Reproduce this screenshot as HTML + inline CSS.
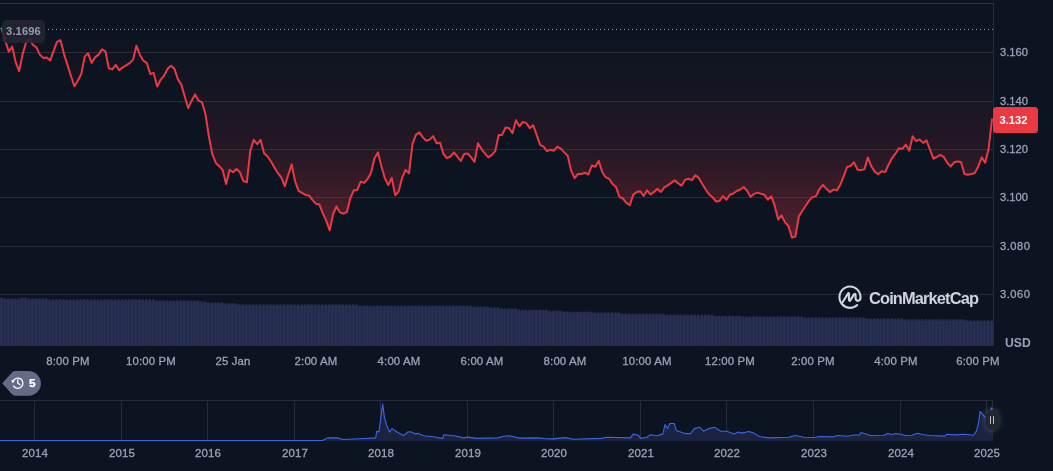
<!DOCTYPE html>
<html><head><meta charset="utf-8"><title>Chart</title>
<style>
html,body{margin:0;padding:0;background:#0d1421;}
body{width:1053px;height:471px;position:relative;overflow:hidden;font-family:"Liberation Sans",sans-serif;color:#9ba1b8;}
svg{position:absolute;left:0;top:0;}
.tl,.yr,.pl,.usd,.cur,.open,.hist,.wm{will-change:transform;}
.tl,.yr,.pl{-webkit-text-stroke:0.3px #9ba1b8;}
.tl{position:absolute;top:353px;width:80px;height:16px;line-height:16px;text-align:center;font-size:11.4px;white-space:nowrap;letter-spacing:0.15px;}
.yr{position:absolute;top:445px;width:40px;height:16px;line-height:16px;text-align:center;font-size:11.5px;letter-spacing:0.1px;}
.pl{position:absolute;left:999.5px;height:16px;line-height:16px;font-size:11.2px;}
.usd{position:absolute;left:1005.4px;top:334.6px;height:16px;line-height:16px;font-size:12.2px;font-weight:bold;}
.cur{position:absolute;left:993px;top:107px;width:45px;height:26px;border-radius:3.5px;background:#ea3943;color:#fff;font-weight:bold;font-size:11.2px;line-height:26px;text-indent:6.5px;}
.open{position:absolute;left:2px;top:20px;width:43px;height:22.8px;border-radius:4.5px;letter-spacing:0.1px;background:rgba(36,38,50,.88);color:#949ab2;font-weight:bold;font-size:11.2px;line-height:22px;text-align:center;}
.hist{position:absolute;left:29.1px;top:374.9px;height:16px;line-height:16px;font-size:11.8px;-webkit-text-stroke:0.25px #fff;font-weight:bold;color:#fff;}
.wm{position:absolute;left:869.4px;top:288.3px;height:20px;line-height:20px;font-size:16.4px;font-weight:bold;color:#d1d4e0;letter-spacing:-0.86px;white-space:nowrap;}
</style></head><body>
<svg width="1053" height="471" viewBox="0 0 1053 471">
<defs>
<linearGradient id="rg" x1="0" y1="29" x2="0" y2="240" gradientUnits="userSpaceOnUse">
<stop offset="0" stop-color="#ea3943" stop-opacity="0"/>
<stop offset="0.2" stop-color="#ea3943" stop-opacity="0.024"/>
<stop offset="0.34" stop-color="#ea3943" stop-opacity="0.053"/>
<stop offset="0.573" stop-color="#ea3943" stop-opacity="0.11"/>
<stop offset="0.763" stop-color="#ea3943" stop-opacity="0.205"/>
<stop offset="1" stop-color="#ea3943" stop-opacity="0.32"/>
</linearGradient>
<filter id="gl" x="-100%" y="-100%" width="300%" height="300%"><feGaussianBlur stdDeviation="2.6"/></filter>
</defs>
<g stroke="#282c3a" stroke-width="1" shape-rendering="crispEdges">
<line x1="0" y1="3.5" x2="993" y2="3.5" stroke="#323645"/>
<line x1="0" y1="52.5" x2="993" y2="52.5"/><line x1="0" y1="101.5" x2="993" y2="101.5"/><line x1="0" y1="149.5" x2="993" y2="149.5"/><line x1="0" y1="197.5" x2="993" y2="197.5"/><line x1="0" y1="246.5" x2="993" y2="246.5"/><line x1="0" y1="294.5" x2="993" y2="294.5"/>
</g>
<path d="M0,29.4 L1.9,29.4 L5.35,41.1 L8.8,51.6 L12.25,46.6 L15.7,62.4 L19.15,71.2 L22.6,54.1 L26.05,42.5 L29.5,39.1 L32.95,44.9 L36.4,47.4 L39.85,54.6 L43.3,57.9 L46.75,57.4 L50.2,60.4 L53.65,50.8 L57.1,41.6 L60.55,40.3 L64.0,54.1 L67.45,64.9 L70.9,75.7 L74.35,86.2 L77.8,80.7 L81.25,74.0 L84.7,56.6 L88.15,53.3 L91.6,62.9 L95.05,57.4 L98.5,54.6 L101.95,49.4 L105.4,51.3 L108.85,68.2 L112.3,69.4 L115.75,64.9 L119.2,70.2 L122.65,67.4 L126.1,65.4 L129.55,63.2 L133.0,59.9 L136.45,45.8 L139.9,54.9 L143.35,60.7 L146.8,62.9 L150.25,74.0 L153.7,72.9 L157.15,86.5 L160.6,79.8 L164.05,75.7 L167.5,69.0 L170.95,65.8 L174.4,68.6 L177.85,79.1 L181.3,84.6 L184.75,96.5 L188.2,108.2 L191.65,100.7 L195.1,94.4 L198.55,100.7 L202.0,102.4 L205.45,114.0 L208.9,136.6 L212.35,154.1 L215.8,162.9 L219.25,166.2 L222.7,170.2 L226.15,184.0 L229.6,169.8 L233.05,172.3 L236.5,169.0 L239.95,172.3 L243.4,181.1 L246.85,182.3 L250.3,150.7 L253.75,139.9 L257.2,144.1 L260.65,139.9 L264.1,153.2 L267.55,156.5 L271.0,161.5 L274.45,167.4 L277.9,173.2 L281.35,177.7 L284.8,186.1 L288.25,174.8 L291.7,164.4 L295.15,181.5 L298.6,190.8 L302.05,192.9 L305.5,194.9 L308.95,195.4 L312.4,199.9 L315.85,203.7 L319.3,204.4 L322.75,213.2 L326.2,220.7 L329.65,230.3 L333.1,214.0 L336.55,206.5 L340.0,212.4 L343.45,213.7 L346.9,211.9 L350.35,198.2 L353.8,190.3 L357.25,189.9 L360.7,181.6 L364.15,182.9 L367.6,178.9 L371.05,172.7 L374.5,158.2 L377.95,152.4 L381.4,166.2 L384.85,178.2 L388.3,185.0 L391.75,177.9 L395.2,195.2 L398.65,191.6 L402.1,177.8 L405.55,169.9 L409.0,173.4 L412.45,144.1 L415.9,134.9 L419.35,132.4 L422.8,137.4 L426.25,140.7 L429.7,139.6 L433.15,136.1 L436.6,143.2 L440.05,142.7 L443.5,154.0 L446.95,158.2 L450.4,156.5 L453.85,152.4 L457.3,156.5 L460.75,161.0 L464.2,154.0 L467.65,153.5 L471.1,157.4 L474.55,161.9 L478.0,143.2 L481.45,149.1 L484.9,153.5 L488.35,157.4 L491.8,154.9 L495.25,151.1 L498.7,134.9 L502.15,134.9 L505.6,127.5 L509.05,128.3 L512.5,133.3 L515.95,120.3 L519.4,126.3 L522.85,122.0 L526.3,123.1 L529.75,128.1 L533.2,125.3 L536.65,134.9 L540.1,144.9 L543.55,146.6 L547.0,151.2 L550.45,149.6 L553.9,150.7 L557.35,146.6 L560.8,148.6 L564.25,152.4 L567.7,155.7 L571.15,170.7 L574.6,178.1 L578.05,174.0 L581.5,174.0 L584.95,172.7 L588.4,174.5 L591.85,165.5 L595.3,166.8 L598.75,160.9 L602.2,172.0 L605.65,177.2 L609.1,178.8 L612.55,184.0 L616.0,186.9 L619.45,197.0 L622.9,198.5 L626.35,202.8 L629.8,205.1 L633.25,194.8 L636.7,192.0 L640.15,191.2 L643.6,196.0 L647.05,190.4 L650.5,194.5 L653.95,191.9 L657.4,188.7 L660.85,192.0 L664.3,187.4 L667.75,185.4 L671.2,182.9 L674.65,180.4 L678.1,183.2 L681.55,185.7 L685.0,179.9 L688.45,178.7 L691.9,180.2 L695.35,175.4 L698.8,177.9 L702.25,184.0 L705.7,189.5 L709.15,194.5 L712.6,197.3 L716.05,201.5 L719.5,201.0 L722.95,196.0 L726.4,199.8 L729.85,194.8 L733.3,193.5 L736.75,191.0 L740.2,189.5 L743.65,187.0 L747.1,190.7 L750.55,196.8 L754.0,193.9 L757.45,192.6 L760.9,193.7 L764.35,194.7 L767.8,199.6 L771.25,196.2 L774.7,205.7 L778.15,219.5 L781.6,215.4 L785.05,222.3 L788.5,226.2 L791.95,237.6 L795.4,236.5 L798.85,216.5 L802.3,210.7 L805.75,205.7 L809.2,200.4 L812.65,197.1 L816.1,196.1 L819.55,188.8 L823.0,184.9 L826.45,188.8 L829.9,192.1 L833.35,189.6 L836.8,190.4 L840.25,184.9 L843.7,176.1 L847.15,167.0 L850.6,165.9 L854.05,162.3 L857.5,169.7 L860.95,170.1 L864.4,169.3 L867.85,157.4 L871.3,166.3 L874.75,171.6 L878.2,174.2 L881.65,171.2 L885.1,172.1 L888.55,164.8 L892.0,158.2 L895.45,153.7 L898.9,148.2 L902.35,149.0 L905.8,144.6 L909.25,150.7 L912.7,136.2 L916.15,141.2 L919.6,139.4 L923.05,142.9 L926.5,140.4 L929.95,149.5 L933.4,158.7 L936.85,157.0 L940.3,154.9 L943.75,156.9 L947.2,162.7 L950.65,166.5 L954.1,162.3 L957.55,161.5 L961.0,162.0 L964.45,174.0 L967.9,174.8 L971.35,174.0 L974.8,173.1 L978.25,166.5 L981.7,157.4 L985.15,162.8 L988.6,149.0 L992.0,119.3 L992,29.4 Z" fill="url(#rg)"/>
<g fill="#222947" shape-rendering="crispEdges"><rect x="-0.44" y="298.9" width="3.49" height="46.4"/><rect x="3.01" y="299.8" width="3.49" height="45.5"/><rect x="6.46" y="299.8" width="3.49" height="45.5"/><rect x="9.91" y="299.8" width="3.49" height="45.5"/><rect x="13.36" y="299.8" width="3.49" height="45.5"/><rect x="16.81" y="299.8" width="3.49" height="45.5"/><rect x="20.26" y="298.9" width="3.49" height="46.4"/><rect x="23.71" y="298.9" width="3.49" height="46.4"/><rect x="27.16" y="299.8" width="3.49" height="45.5"/><rect x="30.61" y="299.8" width="3.49" height="45.5"/><rect x="34.06" y="299.8" width="3.49" height="45.5"/><rect x="37.51" y="299.8" width="3.49" height="45.5"/><rect x="40.96" y="299.8" width="3.49" height="45.5"/><rect x="44.41" y="299.8" width="3.49" height="45.5"/><rect x="47.86" y="300.8" width="3.49" height="44.5"/><rect x="51.31" y="300.8" width="3.49" height="44.5"/><rect x="54.76" y="300.8" width="3.49" height="44.5"/><rect x="58.21" y="300.8" width="3.49" height="44.5"/><rect x="61.66" y="300.8" width="3.49" height="44.5"/><rect x="65.11" y="300.8" width="3.49" height="44.5"/><rect x="68.56" y="300.8" width="3.49" height="44.5"/><rect x="72.01" y="300.8" width="3.49" height="44.5"/><rect x="75.46" y="300.8" width="3.49" height="44.5"/><rect x="78.91" y="300.8" width="3.49" height="44.5"/><rect x="82.36" y="300.8" width="3.49" height="44.5"/><rect x="85.81" y="300.8" width="3.49" height="44.5"/><rect x="89.26" y="300.8" width="3.49" height="44.5"/><rect x="92.71" y="300.8" width="3.49" height="44.5"/><rect x="96.16" y="300.8" width="3.49" height="44.5"/><rect x="99.61" y="300.8" width="3.49" height="44.5"/><rect x="103.06" y="300.8" width="3.49" height="44.5"/><rect x="106.51" y="300.8" width="3.49" height="44.5"/><rect x="109.96" y="300.8" width="3.49" height="44.5"/><rect x="113.41" y="300.8" width="3.49" height="44.5"/><rect x="116.86" y="300.8" width="3.49" height="44.5"/><rect x="120.31" y="300.8" width="3.49" height="44.5"/><rect x="123.76" y="300.8" width="3.49" height="44.5"/><rect x="127.21" y="300.8" width="3.49" height="44.5"/><rect x="130.66" y="300.8" width="3.49" height="44.5"/><rect x="134.11" y="300.8" width="3.49" height="44.5"/><rect x="137.56" y="300.8" width="3.49" height="44.5"/><rect x="141.01" y="300.8" width="3.49" height="44.5"/><rect x="144.46" y="300.8" width="3.49" height="44.5"/><rect x="147.91" y="300.8" width="3.49" height="44.5"/><rect x="151.36" y="300.8" width="3.49" height="44.5"/><rect x="154.81" y="301.7" width="3.49" height="43.6"/><rect x="158.26" y="301.7" width="3.49" height="43.6"/><rect x="161.71" y="301.7" width="3.49" height="43.6"/><rect x="165.16" y="301.7" width="3.49" height="43.6"/><rect x="168.61" y="301.7" width="3.49" height="43.6"/><rect x="172.06" y="301.7" width="3.49" height="43.6"/><rect x="175.51" y="301.7" width="3.49" height="43.6"/><rect x="178.96" y="301.7" width="3.49" height="43.6"/><rect x="182.41" y="301.7" width="3.49" height="43.6"/><rect x="185.86" y="301.7" width="3.49" height="43.6"/><rect x="189.31" y="301.7" width="3.49" height="43.6"/><rect x="192.76" y="301.7" width="3.49" height="43.6"/><rect x="196.21" y="301.7" width="3.49" height="43.6"/><rect x="199.66" y="302.7" width="3.49" height="42.6"/><rect x="203.11" y="302.7" width="3.49" height="42.6"/><rect x="206.56" y="303.8" width="3.49" height="41.5"/><rect x="210.01" y="303.8" width="3.49" height="41.5"/><rect x="213.46" y="303.8" width="3.49" height="41.5"/><rect x="216.91" y="303.8" width="3.49" height="41.5"/><rect x="220.36" y="303.8" width="3.49" height="41.5"/><rect x="223.81" y="304.8" width="3.49" height="40.5"/><rect x="227.26" y="304.8" width="3.49" height="40.5"/><rect x="230.71" y="304.8" width="3.49" height="40.5"/><rect x="234.16" y="304.8" width="3.49" height="40.5"/><rect x="237.61" y="305.8" width="3.49" height="39.5"/><rect x="241.06" y="305.8" width="3.49" height="39.5"/><rect x="244.51" y="305.8" width="3.49" height="39.5"/><rect x="247.96" y="305.8" width="3.49" height="39.5"/><rect x="251.41" y="305.8" width="3.49" height="39.5"/><rect x="254.86" y="305.8" width="3.49" height="39.5"/><rect x="258.31" y="305.8" width="3.49" height="39.5"/><rect x="261.76" y="305.8" width="3.49" height="39.5"/><rect x="265.21" y="305.8" width="3.49" height="39.5"/><rect x="268.66" y="305.8" width="3.49" height="39.5"/><rect x="272.11" y="305.8" width="3.49" height="39.5"/><rect x="275.56" y="305.8" width="3.49" height="39.5"/><rect x="279.01" y="305.8" width="3.49" height="39.5"/><rect x="282.46" y="305.8" width="3.49" height="39.5"/><rect x="285.91" y="305.8" width="3.49" height="39.5"/><rect x="289.36" y="305.8" width="3.49" height="39.5"/><rect x="292.81" y="305.8" width="3.49" height="39.5"/><rect x="296.26" y="305.8" width="3.49" height="39.5"/><rect x="299.71" y="305.8" width="3.49" height="39.5"/><rect x="303.16" y="305.8" width="3.49" height="39.5"/><rect x="306.61" y="305.8" width="3.49" height="39.5"/><rect x="310.06" y="305.8" width="3.49" height="39.5"/><rect x="313.51" y="305.8" width="3.49" height="39.5"/><rect x="316.96" y="305.8" width="3.49" height="39.5"/><rect x="320.41" y="305.8" width="3.49" height="39.5"/><rect x="323.86" y="305.8" width="3.49" height="39.5"/><rect x="327.31" y="305.8" width="3.49" height="39.5"/><rect x="330.76" y="305.8" width="3.49" height="39.5"/><rect x="334.21" y="305.8" width="3.49" height="39.5"/><rect x="337.66" y="305.8" width="3.49" height="39.5"/><rect x="341.11" y="305.8" width="3.49" height="39.5"/><rect x="344.56" y="305.8" width="3.49" height="39.5"/><rect x="348.01" y="305.8" width="3.49" height="39.5"/><rect x="351.46" y="305.8" width="3.49" height="39.5"/><rect x="354.91" y="305.8" width="3.49" height="39.5"/><rect x="358.36" y="306.9" width="3.49" height="38.4"/><rect x="361.81" y="306.9" width="3.49" height="38.4"/><rect x="365.26" y="306.9" width="3.49" height="38.4"/><rect x="368.71" y="306.9" width="3.49" height="38.4"/><rect x="372.16" y="306.9" width="3.49" height="38.4"/><rect x="375.61" y="306.9" width="3.49" height="38.4"/><rect x="379.06" y="306.9" width="3.49" height="38.4"/><rect x="382.51" y="306.9" width="3.49" height="38.4"/><rect x="385.96" y="306.9" width="3.49" height="38.4"/><rect x="389.41" y="306.9" width="3.49" height="38.4"/><rect x="392.86" y="306.9" width="3.49" height="38.4"/><rect x="396.31" y="306.9" width="3.49" height="38.4"/><rect x="399.76" y="306.9" width="3.49" height="38.4"/><rect x="403.21" y="306.9" width="3.49" height="38.4"/><rect x="406.66" y="306.9" width="3.49" height="38.4"/><rect x="410.11" y="306.9" width="3.49" height="38.4"/><rect x="413.56" y="306.9" width="3.49" height="38.4"/><rect x="417.01" y="306.9" width="3.49" height="38.4"/><rect x="420.46" y="306.9" width="3.49" height="38.4"/><rect x="423.91" y="306.9" width="3.49" height="38.4"/><rect x="427.36" y="306.9" width="3.49" height="38.4"/><rect x="430.81" y="306.9" width="3.49" height="38.4"/><rect x="434.26" y="306.9" width="3.49" height="38.4"/><rect x="437.71" y="306.9" width="3.49" height="38.4"/><rect x="441.16" y="306.9" width="3.49" height="38.4"/><rect x="444.61" y="306.9" width="3.49" height="38.4"/><rect x="448.06" y="306.9" width="3.49" height="38.4"/><rect x="451.51" y="306.9" width="3.49" height="38.4"/><rect x="454.96" y="306.9" width="3.49" height="38.4"/><rect x="458.41" y="306.9" width="3.49" height="38.4"/><rect x="461.86" y="306.9" width="3.49" height="38.4"/><rect x="465.31" y="306.9" width="3.49" height="38.4"/><rect x="468.76" y="306.9" width="3.49" height="38.4"/><rect x="472.21" y="307.9" width="3.49" height="37.4"/><rect x="475.66" y="307.9" width="3.49" height="37.4"/><rect x="479.11" y="307.9" width="3.49" height="37.4"/><rect x="482.56" y="307.9" width="3.49" height="37.4"/><rect x="486.01" y="307.9" width="3.49" height="37.4"/><rect x="489.46" y="308.8" width="3.49" height="36.5"/><rect x="492.91" y="308.8" width="3.49" height="36.5"/><rect x="496.36" y="308.8" width="3.49" height="36.5"/><rect x="499.81" y="309.8" width="3.49" height="35.5"/><rect x="503.26" y="309.8" width="3.49" height="35.5"/><rect x="506.71" y="309.8" width="3.49" height="35.5"/><rect x="510.16" y="309.8" width="3.49" height="35.5"/><rect x="513.61" y="309.8" width="3.49" height="35.5"/><rect x="517.06" y="311.0" width="3.49" height="34.3"/><rect x="520.51" y="311.0" width="3.49" height="34.3"/><rect x="523.96" y="311.0" width="3.49" height="34.3"/><rect x="527.41" y="311.0" width="3.49" height="34.3"/><rect x="530.86" y="311.0" width="3.49" height="34.3"/><rect x="534.31" y="311.0" width="3.49" height="34.3"/><rect x="537.76" y="311.0" width="3.49" height="34.3"/><rect x="541.21" y="311.0" width="3.49" height="34.3"/><rect x="544.66" y="311.0" width="3.49" height="34.3"/><rect x="548.11" y="311.9" width="3.49" height="33.4"/><rect x="551.56" y="311.9" width="3.49" height="33.4"/><rect x="555.01" y="311.9" width="3.49" height="33.4"/><rect x="558.46" y="311.9" width="3.49" height="33.4"/><rect x="561.91" y="312.9" width="3.49" height="32.4"/><rect x="565.36" y="312.9" width="3.49" height="32.4"/><rect x="568.81" y="312.9" width="3.49" height="32.4"/><rect x="572.26" y="312.9" width="3.49" height="32.4"/><rect x="575.71" y="312.9" width="3.49" height="32.4"/><rect x="579.16" y="312.9" width="3.49" height="32.4"/><rect x="582.61" y="312.9" width="3.49" height="32.4"/><rect x="586.06" y="312.9" width="3.49" height="32.4"/><rect x="589.51" y="312.9" width="3.49" height="32.4"/><rect x="592.96" y="313.8" width="3.49" height="31.5"/><rect x="596.41" y="313.8" width="3.49" height="31.5"/><rect x="599.86" y="313.8" width="3.49" height="31.5"/><rect x="603.31" y="313.8" width="3.49" height="31.5"/><rect x="606.76" y="313.8" width="3.49" height="31.5"/><rect x="610.21" y="313.8" width="3.49" height="31.5"/><rect x="613.66" y="313.8" width="3.49" height="31.5"/><rect x="617.11" y="313.8" width="3.49" height="31.5"/><rect x="620.56" y="315.0" width="3.49" height="30.3"/><rect x="624.01" y="315.0" width="3.49" height="30.3"/><rect x="627.46" y="315.0" width="3.49" height="30.3"/><rect x="630.91" y="315.0" width="3.49" height="30.3"/><rect x="634.36" y="315.0" width="3.49" height="30.3"/><rect x="637.81" y="315.0" width="3.49" height="30.3"/><rect x="641.26" y="315.0" width="3.49" height="30.3"/><rect x="644.71" y="315.0" width="3.49" height="30.3"/><rect x="648.16" y="315.0" width="3.49" height="30.3"/><rect x="651.61" y="315.0" width="3.49" height="30.3"/><rect x="655.06" y="315.0" width="3.49" height="30.3"/><rect x="658.51" y="315.0" width="3.49" height="30.3"/><rect x="661.96" y="315.0" width="3.49" height="30.3"/><rect x="665.41" y="316.0" width="3.49" height="29.3"/><rect x="668.86" y="316.0" width="3.49" height="29.3"/><rect x="672.31" y="316.0" width="3.49" height="29.3"/><rect x="675.76" y="316.0" width="3.49" height="29.3"/><rect x="679.21" y="316.0" width="3.49" height="29.3"/><rect x="682.66" y="316.0" width="3.49" height="29.3"/><rect x="686.11" y="316.0" width="3.49" height="29.3"/><rect x="689.56" y="316.0" width="3.49" height="29.3"/><rect x="693.01" y="316.0" width="3.49" height="29.3"/><rect x="696.46" y="316.0" width="3.49" height="29.3"/><rect x="699.91" y="316.0" width="3.49" height="29.3"/><rect x="703.36" y="316.0" width="3.49" height="29.3"/><rect x="706.81" y="316.0" width="3.49" height="29.3"/><rect x="710.26" y="316.0" width="3.49" height="29.3"/><rect x="713.71" y="317.2" width="3.49" height="28.1"/><rect x="717.16" y="317.2" width="3.49" height="28.1"/><rect x="720.61" y="317.2" width="3.49" height="28.1"/><rect x="724.06" y="317.2" width="3.49" height="28.1"/><rect x="727.51" y="317.2" width="3.49" height="28.1"/><rect x="730.96" y="317.2" width="3.49" height="28.1"/><rect x="734.41" y="317.2" width="3.49" height="28.1"/><rect x="737.86" y="317.2" width="3.49" height="28.1"/><rect x="741.31" y="317.8" width="3.49" height="27.5"/><rect x="744.76" y="317.8" width="3.49" height="27.5"/><rect x="748.21" y="317.8" width="3.49" height="27.5"/><rect x="751.66" y="317.8" width="3.49" height="27.5"/><rect x="755.11" y="317.8" width="3.49" height="27.5"/><rect x="758.56" y="317.8" width="3.49" height="27.5"/><rect x="762.01" y="317.8" width="3.49" height="27.5"/><rect x="765.46" y="317.8" width="3.49" height="27.5"/><rect x="768.91" y="317.8" width="3.49" height="27.5"/><rect x="772.36" y="317.8" width="3.49" height="27.5"/><rect x="775.81" y="317.8" width="3.49" height="27.5"/><rect x="779.26" y="317.8" width="3.49" height="27.5"/><rect x="782.71" y="317.8" width="3.49" height="27.5"/><rect x="786.16" y="317.8" width="3.49" height="27.5"/><rect x="789.61" y="317.8" width="3.49" height="27.5"/><rect x="793.06" y="317.8" width="3.49" height="27.5"/><rect x="796.51" y="317.8" width="3.49" height="27.5"/><rect x="799.96" y="317.8" width="3.49" height="27.5"/><rect x="803.41" y="318.8" width="3.49" height="26.5"/><rect x="806.86" y="318.8" width="3.49" height="26.5"/><rect x="810.31" y="318.8" width="3.49" height="26.5"/><rect x="813.76" y="318.8" width="3.49" height="26.5"/><rect x="817.21" y="318.8" width="3.49" height="26.5"/><rect x="820.66" y="318.8" width="3.49" height="26.5"/><rect x="824.11" y="318.8" width="3.49" height="26.5"/><rect x="827.56" y="318.8" width="3.49" height="26.5"/><rect x="831.01" y="318.8" width="3.49" height="26.5"/><rect x="834.46" y="318.8" width="3.49" height="26.5"/><rect x="837.91" y="318.8" width="3.49" height="26.5"/><rect x="841.36" y="318.8" width="3.49" height="26.5"/><rect x="844.81" y="318.8" width="3.49" height="26.5"/><rect x="848.26" y="318.8" width="3.49" height="26.5"/><rect x="851.71" y="318.8" width="3.49" height="26.5"/><rect x="855.16" y="318.8" width="3.49" height="26.5"/><rect x="858.61" y="318.8" width="3.49" height="26.5"/><rect x="862.06" y="318.8" width="3.49" height="26.5"/><rect x="865.51" y="319.8" width="3.49" height="25.5"/><rect x="868.96" y="319.8" width="3.49" height="25.5"/><rect x="872.41" y="319.8" width="3.49" height="25.5"/><rect x="875.86" y="319.8" width="3.49" height="25.5"/><rect x="879.31" y="319.8" width="3.49" height="25.5"/><rect x="882.76" y="319.8" width="3.49" height="25.5"/><rect x="886.21" y="319.8" width="3.49" height="25.5"/><rect x="889.66" y="319.8" width="3.49" height="25.5"/><rect x="893.11" y="319.8" width="3.49" height="25.5"/><rect x="896.56" y="319.8" width="3.49" height="25.5"/><rect x="900.01" y="319.8" width="3.49" height="25.5"/><rect x="903.46" y="320.7" width="3.49" height="24.6"/><rect x="906.91" y="320.7" width="3.49" height="24.6"/><rect x="910.36" y="320.7" width="3.49" height="24.6"/><rect x="913.81" y="320.7" width="3.49" height="24.6"/><rect x="917.26" y="320.7" width="3.49" height="24.6"/><rect x="920.71" y="320.7" width="3.49" height="24.6"/><rect x="924.16" y="320.7" width="3.49" height="24.6"/><rect x="927.61" y="320.7" width="3.49" height="24.6"/><rect x="931.06" y="320.7" width="3.49" height="24.6"/><rect x="934.51" y="320.7" width="3.49" height="24.6"/><rect x="937.96" y="320.7" width="3.49" height="24.6"/><rect x="941.41" y="320.7" width="3.49" height="24.6"/><rect x="944.86" y="320.7" width="3.49" height="24.6"/><rect x="948.31" y="320.7" width="3.49" height="24.6"/><rect x="951.76" y="320.7" width="3.49" height="24.6"/><rect x="955.21" y="320.7" width="3.49" height="24.6"/><rect x="958.66" y="320.7" width="3.49" height="24.6"/><rect x="962.11" y="320.7" width="3.49" height="24.6"/><rect x="965.56" y="321.7" width="3.49" height="23.6"/><rect x="969.01" y="321.7" width="3.49" height="23.6"/><rect x="972.46" y="321.7" width="3.49" height="23.6"/><rect x="975.91" y="321.7" width="3.49" height="23.6"/><rect x="979.36" y="321.7" width="3.49" height="23.6"/><rect x="982.81" y="321.7" width="3.49" height="23.6"/><rect x="986.26" y="321.7" width="3.49" height="23.6"/><rect x="989.71" y="321.7" width="3.49" height="23.6"/></g><g fill="#272f52"><path d="M-0.04,345.3 V298.3 q0,-0.9 0.9,-0.9 h0.89 q0.9,0 0.9,0.9 V345.3 Z"/><path d="M3.41,345.3 V299.2 q0,-0.9 0.9,-0.9 h0.89 q0.9,0 0.9,0.9 V345.3 Z"/><path d="M6.86,345.3 V299.2 q0,-0.9 0.9,-0.9 h0.89 q0.9,0 0.9,0.9 V345.3 Z"/><path d="M10.31,345.3 V299.2 q0,-0.9 0.9,-0.9 h0.89 q0.9,0 0.9,0.9 V345.3 Z"/><path d="M13.76,345.3 V299.2 q0,-0.9 0.9,-0.9 h0.89 q0.9,0 0.9,0.9 V345.3 Z"/><path d="M17.21,345.3 V299.2 q0,-0.9 0.9,-0.9 h0.89 q0.9,0 0.9,0.9 V345.3 Z"/><path d="M20.66,345.3 V298.3 q0,-0.9 0.9,-0.9 h0.89 q0.9,0 0.9,0.9 V345.3 Z"/><path d="M24.11,345.3 V298.3 q0,-0.9 0.9,-0.9 h0.89 q0.9,0 0.9,0.9 V345.3 Z"/><path d="M27.56,345.3 V299.2 q0,-0.9 0.9,-0.9 h0.89 q0.9,0 0.9,0.9 V345.3 Z"/><path d="M31.01,345.3 V299.2 q0,-0.9 0.9,-0.9 h0.89 q0.9,0 0.9,0.9 V345.3 Z"/><path d="M34.46,345.3 V299.2 q0,-0.9 0.9,-0.9 h0.89 q0.9,0 0.9,0.9 V345.3 Z"/><path d="M37.91,345.3 V299.2 q0,-0.9 0.9,-0.9 h0.89 q0.9,0 0.9,0.9 V345.3 Z"/><path d="M41.36,345.3 V299.2 q0,-0.9 0.9,-0.9 h0.89 q0.9,0 0.9,0.9 V345.3 Z"/><path d="M44.81,345.3 V299.2 q0,-0.9 0.9,-0.9 h0.89 q0.9,0 0.9,0.9 V345.3 Z"/><path d="M48.26,345.3 V300.2 q0,-0.9 0.9,-0.9 h0.89 q0.9,0 0.9,0.9 V345.3 Z"/><path d="M51.71,345.3 V300.2 q0,-0.9 0.9,-0.9 h0.89 q0.9,0 0.9,0.9 V345.3 Z"/><path d="M55.16,345.3 V300.2 q0,-0.9 0.9,-0.9 h0.89 q0.9,0 0.9,0.9 V345.3 Z"/><path d="M58.61,345.3 V300.2 q0,-0.9 0.9,-0.9 h0.89 q0.9,0 0.9,0.9 V345.3 Z"/><path d="M62.06,345.3 V300.2 q0,-0.9 0.9,-0.9 h0.89 q0.9,0 0.9,0.9 V345.3 Z"/><path d="M65.51,345.3 V300.2 q0,-0.9 0.9,-0.9 h0.89 q0.9,0 0.9,0.9 V345.3 Z"/><path d="M68.96,345.3 V300.2 q0,-0.9 0.9,-0.9 h0.89 q0.9,0 0.9,0.9 V345.3 Z"/><path d="M72.41,345.3 V300.2 q0,-0.9 0.9,-0.9 h0.89 q0.9,0 0.9,0.9 V345.3 Z"/><path d="M75.86,345.3 V300.2 q0,-0.9 0.9,-0.9 h0.89 q0.9,0 0.9,0.9 V345.3 Z"/><path d="M79.31,345.3 V300.2 q0,-0.9 0.9,-0.9 h0.89 q0.9,0 0.9,0.9 V345.3 Z"/><path d="M82.76,345.3 V300.2 q0,-0.9 0.9,-0.9 h0.89 q0.9,0 0.9,0.9 V345.3 Z"/><path d="M86.21,345.3 V300.2 q0,-0.9 0.9,-0.9 h0.89 q0.9,0 0.9,0.9 V345.3 Z"/><path d="M89.66,345.3 V300.2 q0,-0.9 0.9,-0.9 h0.89 q0.9,0 0.9,0.9 V345.3 Z"/><path d="M93.11,345.3 V300.2 q0,-0.9 0.9,-0.9 h0.89 q0.9,0 0.9,0.9 V345.3 Z"/><path d="M96.56,345.3 V300.2 q0,-0.9 0.9,-0.9 h0.89 q0.9,0 0.9,0.9 V345.3 Z"/><path d="M100.01,345.3 V300.2 q0,-0.9 0.9,-0.9 h0.89 q0.9,0 0.9,0.9 V345.3 Z"/><path d="M103.46,345.3 V300.2 q0,-0.9 0.9,-0.9 h0.89 q0.9,0 0.9,0.9 V345.3 Z"/><path d="M106.91,345.3 V300.2 q0,-0.9 0.9,-0.9 h0.89 q0.9,0 0.9,0.9 V345.3 Z"/><path d="M110.36,345.3 V300.2 q0,-0.9 0.9,-0.9 h0.89 q0.9,0 0.9,0.9 V345.3 Z"/><path d="M113.81,345.3 V300.2 q0,-0.9 0.9,-0.9 h0.89 q0.9,0 0.9,0.9 V345.3 Z"/><path d="M117.26,345.3 V300.2 q0,-0.9 0.9,-0.9 h0.89 q0.9,0 0.9,0.9 V345.3 Z"/><path d="M120.71,345.3 V300.2 q0,-0.9 0.9,-0.9 h0.89 q0.9,0 0.9,0.9 V345.3 Z"/><path d="M124.16,345.3 V300.2 q0,-0.9 0.9,-0.9 h0.89 q0.9,0 0.9,0.9 V345.3 Z"/><path d="M127.61,345.3 V300.2 q0,-0.9 0.9,-0.9 h0.89 q0.9,0 0.9,0.9 V345.3 Z"/><path d="M131.06,345.3 V300.2 q0,-0.9 0.9,-0.9 h0.89 q0.9,0 0.9,0.9 V345.3 Z"/><path d="M134.51,345.3 V300.2 q0,-0.9 0.9,-0.9 h0.89 q0.9,0 0.9,0.9 V345.3 Z"/><path d="M137.96,345.3 V300.2 q0,-0.9 0.9,-0.9 h0.89 q0.9,0 0.9,0.9 V345.3 Z"/><path d="M141.41,345.3 V300.2 q0,-0.9 0.9,-0.9 h0.89 q0.9,0 0.9,0.9 V345.3 Z"/><path d="M144.86,345.3 V300.2 q0,-0.9 0.9,-0.9 h0.89 q0.9,0 0.9,0.9 V345.3 Z"/><path d="M148.31,345.3 V300.2 q0,-0.9 0.9,-0.9 h0.89 q0.9,0 0.9,0.9 V345.3 Z"/><path d="M151.76,345.3 V300.2 q0,-0.9 0.9,-0.9 h0.89 q0.9,0 0.9,0.9 V345.3 Z"/><path d="M155.21,345.3 V301.1 q0,-0.9 0.9,-0.9 h0.89 q0.9,0 0.9,0.9 V345.3 Z"/><path d="M158.66,345.3 V301.1 q0,-0.9 0.9,-0.9 h0.89 q0.9,0 0.9,0.9 V345.3 Z"/><path d="M162.11,345.3 V301.1 q0,-0.9 0.9,-0.9 h0.89 q0.9,0 0.9,0.9 V345.3 Z"/><path d="M165.56,345.3 V301.1 q0,-0.9 0.9,-0.9 h0.89 q0.9,0 0.9,0.9 V345.3 Z"/><path d="M169.01,345.3 V301.1 q0,-0.9 0.9,-0.9 h0.89 q0.9,0 0.9,0.9 V345.3 Z"/><path d="M172.46,345.3 V301.1 q0,-0.9 0.9,-0.9 h0.89 q0.9,0 0.9,0.9 V345.3 Z"/><path d="M175.91,345.3 V301.1 q0,-0.9 0.9,-0.9 h0.89 q0.9,0 0.9,0.9 V345.3 Z"/><path d="M179.36,345.3 V301.1 q0,-0.9 0.9,-0.9 h0.89 q0.9,0 0.9,0.9 V345.3 Z"/><path d="M182.81,345.3 V301.1 q0,-0.9 0.9,-0.9 h0.89 q0.9,0 0.9,0.9 V345.3 Z"/><path d="M186.26,345.3 V301.1 q0,-0.9 0.9,-0.9 h0.89 q0.9,0 0.9,0.9 V345.3 Z"/><path d="M189.71,345.3 V301.1 q0,-0.9 0.9,-0.9 h0.89 q0.9,0 0.9,0.9 V345.3 Z"/><path d="M193.16,345.3 V301.1 q0,-0.9 0.9,-0.9 h0.89 q0.9,0 0.9,0.9 V345.3 Z"/><path d="M196.61,345.3 V301.1 q0,-0.9 0.9,-0.9 h0.89 q0.9,0 0.9,0.9 V345.3 Z"/><path d="M200.06,345.3 V302.1 q0,-0.9 0.9,-0.9 h0.89 q0.9,0 0.9,0.9 V345.3 Z"/><path d="M203.51,345.3 V302.1 q0,-0.9 0.9,-0.9 h0.89 q0.9,0 0.9,0.9 V345.3 Z"/><path d="M206.96,345.3 V303.2 q0,-0.9 0.9,-0.9 h0.89 q0.9,0 0.9,0.9 V345.3 Z"/><path d="M210.41,345.3 V303.2 q0,-0.9 0.9,-0.9 h0.89 q0.9,0 0.9,0.9 V345.3 Z"/><path d="M213.86,345.3 V303.2 q0,-0.9 0.9,-0.9 h0.89 q0.9,0 0.9,0.9 V345.3 Z"/><path d="M217.31,345.3 V303.2 q0,-0.9 0.9,-0.9 h0.89 q0.9,0 0.9,0.9 V345.3 Z"/><path d="M220.76,345.3 V303.2 q0,-0.9 0.9,-0.9 h0.89 q0.9,0 0.9,0.9 V345.3 Z"/><path d="M224.21,345.3 V304.2 q0,-0.9 0.9,-0.9 h0.89 q0.9,0 0.9,0.9 V345.3 Z"/><path d="M227.66,345.3 V304.2 q0,-0.9 0.9,-0.9 h0.89 q0.9,0 0.9,0.9 V345.3 Z"/><path d="M231.11,345.3 V304.2 q0,-0.9 0.9,-0.9 h0.89 q0.9,0 0.9,0.9 V345.3 Z"/><path d="M234.56,345.3 V304.2 q0,-0.9 0.9,-0.9 h0.89 q0.9,0 0.9,0.9 V345.3 Z"/><path d="M238.01,345.3 V305.2 q0,-0.9 0.9,-0.9 h0.89 q0.9,0 0.9,0.9 V345.3 Z"/><path d="M241.46,345.3 V305.2 q0,-0.9 0.9,-0.9 h0.89 q0.9,0 0.9,0.9 V345.3 Z"/><path d="M244.91,345.3 V305.2 q0,-0.9 0.9,-0.9 h0.89 q0.9,0 0.9,0.9 V345.3 Z"/><path d="M248.36,345.3 V305.2 q0,-0.9 0.9,-0.9 h0.89 q0.9,0 0.9,0.9 V345.3 Z"/><path d="M251.81,345.3 V305.2 q0,-0.9 0.9,-0.9 h0.89 q0.9,0 0.9,0.9 V345.3 Z"/><path d="M255.26,345.3 V305.2 q0,-0.9 0.9,-0.9 h0.89 q0.9,0 0.9,0.9 V345.3 Z"/><path d="M258.71,345.3 V305.2 q0,-0.9 0.9,-0.9 h0.89 q0.9,0 0.9,0.9 V345.3 Z"/><path d="M262.16,345.3 V305.2 q0,-0.9 0.9,-0.9 h0.89 q0.9,0 0.9,0.9 V345.3 Z"/><path d="M265.61,345.3 V305.2 q0,-0.9 0.9,-0.9 h0.89 q0.9,0 0.9,0.9 V345.3 Z"/><path d="M269.06,345.3 V305.2 q0,-0.9 0.9,-0.9 h0.89 q0.9,0 0.9,0.9 V345.3 Z"/><path d="M272.51,345.3 V305.2 q0,-0.9 0.9,-0.9 h0.89 q0.9,0 0.9,0.9 V345.3 Z"/><path d="M275.96,345.3 V305.2 q0,-0.9 0.9,-0.9 h0.89 q0.9,0 0.9,0.9 V345.3 Z"/><path d="M279.41,345.3 V305.2 q0,-0.9 0.9,-0.9 h0.89 q0.9,0 0.9,0.9 V345.3 Z"/><path d="M282.86,345.3 V305.2 q0,-0.9 0.9,-0.9 h0.89 q0.9,0 0.9,0.9 V345.3 Z"/><path d="M286.31,345.3 V305.2 q0,-0.9 0.9,-0.9 h0.89 q0.9,0 0.9,0.9 V345.3 Z"/><path d="M289.76,345.3 V305.2 q0,-0.9 0.9,-0.9 h0.89 q0.9,0 0.9,0.9 V345.3 Z"/><path d="M293.21,345.3 V305.2 q0,-0.9 0.9,-0.9 h0.89 q0.9,0 0.9,0.9 V345.3 Z"/><path d="M296.66,345.3 V305.2 q0,-0.9 0.9,-0.9 h0.89 q0.9,0 0.9,0.9 V345.3 Z"/><path d="M300.11,345.3 V305.2 q0,-0.9 0.9,-0.9 h0.89 q0.9,0 0.9,0.9 V345.3 Z"/><path d="M303.56,345.3 V305.2 q0,-0.9 0.9,-0.9 h0.89 q0.9,0 0.9,0.9 V345.3 Z"/><path d="M307.01,345.3 V305.2 q0,-0.9 0.9,-0.9 h0.89 q0.9,0 0.9,0.9 V345.3 Z"/><path d="M310.46,345.3 V305.2 q0,-0.9 0.9,-0.9 h0.89 q0.9,0 0.9,0.9 V345.3 Z"/><path d="M313.91,345.3 V305.2 q0,-0.9 0.9,-0.9 h0.89 q0.9,0 0.9,0.9 V345.3 Z"/><path d="M317.36,345.3 V305.2 q0,-0.9 0.9,-0.9 h0.89 q0.9,0 0.9,0.9 V345.3 Z"/><path d="M320.81,345.3 V305.2 q0,-0.9 0.9,-0.9 h0.89 q0.9,0 0.9,0.9 V345.3 Z"/><path d="M324.26,345.3 V305.2 q0,-0.9 0.9,-0.9 h0.89 q0.9,0 0.9,0.9 V345.3 Z"/><path d="M327.71,345.3 V305.2 q0,-0.9 0.9,-0.9 h0.89 q0.9,0 0.9,0.9 V345.3 Z"/><path d="M331.16,345.3 V305.2 q0,-0.9 0.9,-0.9 h0.89 q0.9,0 0.9,0.9 V345.3 Z"/><path d="M334.61,345.3 V305.2 q0,-0.9 0.9,-0.9 h0.89 q0.9,0 0.9,0.9 V345.3 Z"/><path d="M338.06,345.3 V305.2 q0,-0.9 0.9,-0.9 h0.89 q0.9,0 0.9,0.9 V345.3 Z"/><path d="M341.51,345.3 V305.2 q0,-0.9 0.9,-0.9 h0.89 q0.9,0 0.9,0.9 V345.3 Z"/><path d="M344.96,345.3 V305.2 q0,-0.9 0.9,-0.9 h0.89 q0.9,0 0.9,0.9 V345.3 Z"/><path d="M348.41,345.3 V305.2 q0,-0.9 0.9,-0.9 h0.89 q0.9,0 0.9,0.9 V345.3 Z"/><path d="M351.86,345.3 V305.2 q0,-0.9 0.9,-0.9 h0.89 q0.9,0 0.9,0.9 V345.3 Z"/><path d="M355.31,345.3 V305.2 q0,-0.9 0.9,-0.9 h0.89 q0.9,0 0.9,0.9 V345.3 Z"/><path d="M358.76,345.3 V306.3 q0,-0.9 0.9,-0.9 h0.89 q0.9,0 0.9,0.9 V345.3 Z"/><path d="M362.21,345.3 V306.3 q0,-0.9 0.9,-0.9 h0.89 q0.9,0 0.9,0.9 V345.3 Z"/><path d="M365.66,345.3 V306.3 q0,-0.9 0.9,-0.9 h0.89 q0.9,0 0.9,0.9 V345.3 Z"/><path d="M369.11,345.3 V306.3 q0,-0.9 0.9,-0.9 h0.89 q0.9,0 0.9,0.9 V345.3 Z"/><path d="M372.56,345.3 V306.3 q0,-0.9 0.9,-0.9 h0.89 q0.9,0 0.9,0.9 V345.3 Z"/><path d="M376.01,345.3 V306.3 q0,-0.9 0.9,-0.9 h0.89 q0.9,0 0.9,0.9 V345.3 Z"/><path d="M379.46,345.3 V306.3 q0,-0.9 0.9,-0.9 h0.89 q0.9,0 0.9,0.9 V345.3 Z"/><path d="M382.91,345.3 V306.3 q0,-0.9 0.9,-0.9 h0.89 q0.9,0 0.9,0.9 V345.3 Z"/><path d="M386.36,345.3 V306.3 q0,-0.9 0.9,-0.9 h0.89 q0.9,0 0.9,0.9 V345.3 Z"/><path d="M389.81,345.3 V306.3 q0,-0.9 0.9,-0.9 h0.89 q0.9,0 0.9,0.9 V345.3 Z"/><path d="M393.26,345.3 V306.3 q0,-0.9 0.9,-0.9 h0.89 q0.9,0 0.9,0.9 V345.3 Z"/><path d="M396.71,345.3 V306.3 q0,-0.9 0.9,-0.9 h0.89 q0.9,0 0.9,0.9 V345.3 Z"/><path d="M400.16,345.3 V306.3 q0,-0.9 0.9,-0.9 h0.89 q0.9,0 0.9,0.9 V345.3 Z"/><path d="M403.61,345.3 V306.3 q0,-0.9 0.9,-0.9 h0.89 q0.9,0 0.9,0.9 V345.3 Z"/><path d="M407.06,345.3 V306.3 q0,-0.9 0.9,-0.9 h0.89 q0.9,0 0.9,0.9 V345.3 Z"/><path d="M410.51,345.3 V306.3 q0,-0.9 0.9,-0.9 h0.89 q0.9,0 0.9,0.9 V345.3 Z"/><path d="M413.96,345.3 V306.3 q0,-0.9 0.9,-0.9 h0.89 q0.9,0 0.9,0.9 V345.3 Z"/><path d="M417.41,345.3 V306.3 q0,-0.9 0.9,-0.9 h0.89 q0.9,0 0.9,0.9 V345.3 Z"/><path d="M420.86,345.3 V306.3 q0,-0.9 0.9,-0.9 h0.89 q0.9,0 0.9,0.9 V345.3 Z"/><path d="M424.31,345.3 V306.3 q0,-0.9 0.9,-0.9 h0.89 q0.9,0 0.9,0.9 V345.3 Z"/><path d="M427.76,345.3 V306.3 q0,-0.9 0.9,-0.9 h0.89 q0.9,0 0.9,0.9 V345.3 Z"/><path d="M431.21,345.3 V306.3 q0,-0.9 0.9,-0.9 h0.89 q0.9,0 0.9,0.9 V345.3 Z"/><path d="M434.66,345.3 V306.3 q0,-0.9 0.9,-0.9 h0.89 q0.9,0 0.9,0.9 V345.3 Z"/><path d="M438.11,345.3 V306.3 q0,-0.9 0.9,-0.9 h0.89 q0.9,0 0.9,0.9 V345.3 Z"/><path d="M441.56,345.3 V306.3 q0,-0.9 0.9,-0.9 h0.89 q0.9,0 0.9,0.9 V345.3 Z"/><path d="M445.01,345.3 V306.3 q0,-0.9 0.9,-0.9 h0.89 q0.9,0 0.9,0.9 V345.3 Z"/><path d="M448.46,345.3 V306.3 q0,-0.9 0.9,-0.9 h0.89 q0.9,0 0.9,0.9 V345.3 Z"/><path d="M451.91,345.3 V306.3 q0,-0.9 0.9,-0.9 h0.89 q0.9,0 0.9,0.9 V345.3 Z"/><path d="M455.36,345.3 V306.3 q0,-0.9 0.9,-0.9 h0.89 q0.9,0 0.9,0.9 V345.3 Z"/><path d="M458.81,345.3 V306.3 q0,-0.9 0.9,-0.9 h0.89 q0.9,0 0.9,0.9 V345.3 Z"/><path d="M462.26,345.3 V306.3 q0,-0.9 0.9,-0.9 h0.89 q0.9,0 0.9,0.9 V345.3 Z"/><path d="M465.71,345.3 V306.3 q0,-0.9 0.9,-0.9 h0.89 q0.9,0 0.9,0.9 V345.3 Z"/><path d="M469.16,345.3 V306.3 q0,-0.9 0.9,-0.9 h0.89 q0.9,0 0.9,0.9 V345.3 Z"/><path d="M472.61,345.3 V307.3 q0,-0.9 0.9,-0.9 h0.89 q0.9,0 0.9,0.9 V345.3 Z"/><path d="M476.06,345.3 V307.3 q0,-0.9 0.9,-0.9 h0.89 q0.9,0 0.9,0.9 V345.3 Z"/><path d="M479.51,345.3 V307.3 q0,-0.9 0.9,-0.9 h0.89 q0.9,0 0.9,0.9 V345.3 Z"/><path d="M482.96,345.3 V307.3 q0,-0.9 0.9,-0.9 h0.89 q0.9,0 0.9,0.9 V345.3 Z"/><path d="M486.41,345.3 V307.3 q0,-0.9 0.9,-0.9 h0.89 q0.9,0 0.9,0.9 V345.3 Z"/><path d="M489.86,345.3 V308.2 q0,-0.9 0.9,-0.9 h0.89 q0.9,0 0.9,0.9 V345.3 Z"/><path d="M493.31,345.3 V308.2 q0,-0.9 0.9,-0.9 h0.89 q0.9,0 0.9,0.9 V345.3 Z"/><path d="M496.76,345.3 V308.2 q0,-0.9 0.9,-0.9 h0.89 q0.9,0 0.9,0.9 V345.3 Z"/><path d="M500.21,345.3 V309.2 q0,-0.9 0.9,-0.9 h0.89 q0.9,0 0.9,0.9 V345.3 Z"/><path d="M503.66,345.3 V309.2 q0,-0.9 0.9,-0.9 h0.89 q0.9,0 0.9,0.9 V345.3 Z"/><path d="M507.11,345.3 V309.2 q0,-0.9 0.9,-0.9 h0.89 q0.9,0 0.9,0.9 V345.3 Z"/><path d="M510.56,345.3 V309.2 q0,-0.9 0.9,-0.9 h0.89 q0.9,0 0.9,0.9 V345.3 Z"/><path d="M514.01,345.3 V309.2 q0,-0.9 0.9,-0.9 h0.89 q0.9,0 0.9,0.9 V345.3 Z"/><path d="M517.46,345.3 V310.4 q0,-0.9 0.9,-0.9 h0.89 q0.9,0 0.9,0.9 V345.3 Z"/><path d="M520.91,345.3 V310.4 q0,-0.9 0.9,-0.9 h0.89 q0.9,0 0.9,0.9 V345.3 Z"/><path d="M524.36,345.3 V310.4 q0,-0.9 0.9,-0.9 h0.89 q0.9,0 0.9,0.9 V345.3 Z"/><path d="M527.81,345.3 V310.4 q0,-0.9 0.9,-0.9 h0.89 q0.9,0 0.9,0.9 V345.3 Z"/><path d="M531.26,345.3 V310.4 q0,-0.9 0.9,-0.9 h0.89 q0.9,0 0.9,0.9 V345.3 Z"/><path d="M534.71,345.3 V310.4 q0,-0.9 0.9,-0.9 h0.89 q0.9,0 0.9,0.9 V345.3 Z"/><path d="M538.16,345.3 V310.4 q0,-0.9 0.9,-0.9 h0.89 q0.9,0 0.9,0.9 V345.3 Z"/><path d="M541.61,345.3 V310.4 q0,-0.9 0.9,-0.9 h0.89 q0.9,0 0.9,0.9 V345.3 Z"/><path d="M545.06,345.3 V310.4 q0,-0.9 0.9,-0.9 h0.89 q0.9,0 0.9,0.9 V345.3 Z"/><path d="M548.51,345.3 V311.3 q0,-0.9 0.9,-0.9 h0.89 q0.9,0 0.9,0.9 V345.3 Z"/><path d="M551.96,345.3 V311.3 q0,-0.9 0.9,-0.9 h0.89 q0.9,0 0.9,0.9 V345.3 Z"/><path d="M555.41,345.3 V311.3 q0,-0.9 0.9,-0.9 h0.89 q0.9,0 0.9,0.9 V345.3 Z"/><path d="M558.86,345.3 V311.3 q0,-0.9 0.9,-0.9 h0.89 q0.9,0 0.9,0.9 V345.3 Z"/><path d="M562.31,345.3 V312.3 q0,-0.9 0.9,-0.9 h0.89 q0.9,0 0.9,0.9 V345.3 Z"/><path d="M565.76,345.3 V312.3 q0,-0.9 0.9,-0.9 h0.89 q0.9,0 0.9,0.9 V345.3 Z"/><path d="M569.21,345.3 V312.3 q0,-0.9 0.9,-0.9 h0.89 q0.9,0 0.9,0.9 V345.3 Z"/><path d="M572.66,345.3 V312.3 q0,-0.9 0.9,-0.9 h0.89 q0.9,0 0.9,0.9 V345.3 Z"/><path d="M576.11,345.3 V312.3 q0,-0.9 0.9,-0.9 h0.89 q0.9,0 0.9,0.9 V345.3 Z"/><path d="M579.56,345.3 V312.3 q0,-0.9 0.9,-0.9 h0.89 q0.9,0 0.9,0.9 V345.3 Z"/><path d="M583.01,345.3 V312.3 q0,-0.9 0.9,-0.9 h0.89 q0.9,0 0.9,0.9 V345.3 Z"/><path d="M586.46,345.3 V312.3 q0,-0.9 0.9,-0.9 h0.89 q0.9,0 0.9,0.9 V345.3 Z"/><path d="M589.91,345.3 V312.3 q0,-0.9 0.9,-0.9 h0.89 q0.9,0 0.9,0.9 V345.3 Z"/><path d="M593.36,345.3 V313.2 q0,-0.9 0.9,-0.9 h0.89 q0.9,0 0.9,0.9 V345.3 Z"/><path d="M596.81,345.3 V313.2 q0,-0.9 0.9,-0.9 h0.89 q0.9,0 0.9,0.9 V345.3 Z"/><path d="M600.26,345.3 V313.2 q0,-0.9 0.9,-0.9 h0.89 q0.9,0 0.9,0.9 V345.3 Z"/><path d="M603.71,345.3 V313.2 q0,-0.9 0.9,-0.9 h0.89 q0.9,0 0.9,0.9 V345.3 Z"/><path d="M607.16,345.3 V313.2 q0,-0.9 0.9,-0.9 h0.89 q0.9,0 0.9,0.9 V345.3 Z"/><path d="M610.61,345.3 V313.2 q0,-0.9 0.9,-0.9 h0.89 q0.9,0 0.9,0.9 V345.3 Z"/><path d="M614.06,345.3 V313.2 q0,-0.9 0.9,-0.9 h0.89 q0.9,0 0.9,0.9 V345.3 Z"/><path d="M617.51,345.3 V313.2 q0,-0.9 0.9,-0.9 h0.89 q0.9,0 0.9,0.9 V345.3 Z"/><path d="M620.96,345.3 V314.4 q0,-0.9 0.9,-0.9 h0.89 q0.9,0 0.9,0.9 V345.3 Z"/><path d="M624.41,345.3 V314.4 q0,-0.9 0.9,-0.9 h0.89 q0.9,0 0.9,0.9 V345.3 Z"/><path d="M627.86,345.3 V314.4 q0,-0.9 0.9,-0.9 h0.89 q0.9,0 0.9,0.9 V345.3 Z"/><path d="M631.31,345.3 V314.4 q0,-0.9 0.9,-0.9 h0.89 q0.9,0 0.9,0.9 V345.3 Z"/><path d="M634.76,345.3 V314.4 q0,-0.9 0.9,-0.9 h0.89 q0.9,0 0.9,0.9 V345.3 Z"/><path d="M638.21,345.3 V314.4 q0,-0.9 0.9,-0.9 h0.89 q0.9,0 0.9,0.9 V345.3 Z"/><path d="M641.66,345.3 V314.4 q0,-0.9 0.9,-0.9 h0.89 q0.9,0 0.9,0.9 V345.3 Z"/><path d="M645.11,345.3 V314.4 q0,-0.9 0.9,-0.9 h0.89 q0.9,0 0.9,0.9 V345.3 Z"/><path d="M648.56,345.3 V314.4 q0,-0.9 0.9,-0.9 h0.89 q0.9,0 0.9,0.9 V345.3 Z"/><path d="M652.01,345.3 V314.4 q0,-0.9 0.9,-0.9 h0.89 q0.9,0 0.9,0.9 V345.3 Z"/><path d="M655.46,345.3 V314.4 q0,-0.9 0.9,-0.9 h0.89 q0.9,0 0.9,0.9 V345.3 Z"/><path d="M658.91,345.3 V314.4 q0,-0.9 0.9,-0.9 h0.89 q0.9,0 0.9,0.9 V345.3 Z"/><path d="M662.36,345.3 V314.4 q0,-0.9 0.9,-0.9 h0.89 q0.9,0 0.9,0.9 V345.3 Z"/><path d="M665.81,345.3 V315.4 q0,-0.9 0.9,-0.9 h0.89 q0.9,0 0.9,0.9 V345.3 Z"/><path d="M669.26,345.3 V315.4 q0,-0.9 0.9,-0.9 h0.89 q0.9,0 0.9,0.9 V345.3 Z"/><path d="M672.71,345.3 V315.4 q0,-0.9 0.9,-0.9 h0.89 q0.9,0 0.9,0.9 V345.3 Z"/><path d="M676.16,345.3 V315.4 q0,-0.9 0.9,-0.9 h0.89 q0.9,0 0.9,0.9 V345.3 Z"/><path d="M679.61,345.3 V315.4 q0,-0.9 0.9,-0.9 h0.89 q0.9,0 0.9,0.9 V345.3 Z"/><path d="M683.06,345.3 V315.4 q0,-0.9 0.9,-0.9 h0.89 q0.9,0 0.9,0.9 V345.3 Z"/><path d="M686.51,345.3 V315.4 q0,-0.9 0.9,-0.9 h0.89 q0.9,0 0.9,0.9 V345.3 Z"/><path d="M689.96,345.3 V315.4 q0,-0.9 0.9,-0.9 h0.89 q0.9,0 0.9,0.9 V345.3 Z"/><path d="M693.41,345.3 V315.4 q0,-0.9 0.9,-0.9 h0.89 q0.9,0 0.9,0.9 V345.3 Z"/><path d="M696.86,345.3 V315.4 q0,-0.9 0.9,-0.9 h0.89 q0.9,0 0.9,0.9 V345.3 Z"/><path d="M700.31,345.3 V315.4 q0,-0.9 0.9,-0.9 h0.89 q0.9,0 0.9,0.9 V345.3 Z"/><path d="M703.76,345.3 V315.4 q0,-0.9 0.9,-0.9 h0.89 q0.9,0 0.9,0.9 V345.3 Z"/><path d="M707.21,345.3 V315.4 q0,-0.9 0.9,-0.9 h0.89 q0.9,0 0.9,0.9 V345.3 Z"/><path d="M710.66,345.3 V315.4 q0,-0.9 0.9,-0.9 h0.89 q0.9,0 0.9,0.9 V345.3 Z"/><path d="M714.11,345.3 V316.6 q0,-0.9 0.9,-0.9 h0.89 q0.9,0 0.9,0.9 V345.3 Z"/><path d="M717.56,345.3 V316.6 q0,-0.9 0.9,-0.9 h0.89 q0.9,0 0.9,0.9 V345.3 Z"/><path d="M721.01,345.3 V316.6 q0,-0.9 0.9,-0.9 h0.89 q0.9,0 0.9,0.9 V345.3 Z"/><path d="M724.46,345.3 V316.6 q0,-0.9 0.9,-0.9 h0.89 q0.9,0 0.9,0.9 V345.3 Z"/><path d="M727.91,345.3 V316.6 q0,-0.9 0.9,-0.9 h0.89 q0.9,0 0.9,0.9 V345.3 Z"/><path d="M731.36,345.3 V316.6 q0,-0.9 0.9,-0.9 h0.89 q0.9,0 0.9,0.9 V345.3 Z"/><path d="M734.81,345.3 V316.6 q0,-0.9 0.9,-0.9 h0.89 q0.9,0 0.9,0.9 V345.3 Z"/><path d="M738.26,345.3 V316.6 q0,-0.9 0.9,-0.9 h0.89 q0.9,0 0.9,0.9 V345.3 Z"/><path d="M741.71,345.3 V317.2 q0,-0.9 0.9,-0.9 h0.89 q0.9,0 0.9,0.9 V345.3 Z"/><path d="M745.16,345.3 V317.2 q0,-0.9 0.9,-0.9 h0.89 q0.9,0 0.9,0.9 V345.3 Z"/><path d="M748.61,345.3 V317.2 q0,-0.9 0.9,-0.9 h0.89 q0.9,0 0.9,0.9 V345.3 Z"/><path d="M752.06,345.3 V317.2 q0,-0.9 0.9,-0.9 h0.89 q0.9,0 0.9,0.9 V345.3 Z"/><path d="M755.51,345.3 V317.2 q0,-0.9 0.9,-0.9 h0.89 q0.9,0 0.9,0.9 V345.3 Z"/><path d="M758.96,345.3 V317.2 q0,-0.9 0.9,-0.9 h0.89 q0.9,0 0.9,0.9 V345.3 Z"/><path d="M762.41,345.3 V317.2 q0,-0.9 0.9,-0.9 h0.89 q0.9,0 0.9,0.9 V345.3 Z"/><path d="M765.86,345.3 V317.2 q0,-0.9 0.9,-0.9 h0.89 q0.9,0 0.9,0.9 V345.3 Z"/><path d="M769.31,345.3 V317.2 q0,-0.9 0.9,-0.9 h0.89 q0.9,0 0.9,0.9 V345.3 Z"/><path d="M772.76,345.3 V317.2 q0,-0.9 0.9,-0.9 h0.89 q0.9,0 0.9,0.9 V345.3 Z"/><path d="M776.21,345.3 V317.2 q0,-0.9 0.9,-0.9 h0.89 q0.9,0 0.9,0.9 V345.3 Z"/><path d="M779.66,345.3 V317.2 q0,-0.9 0.9,-0.9 h0.89 q0.9,0 0.9,0.9 V345.3 Z"/><path d="M783.11,345.3 V317.2 q0,-0.9 0.9,-0.9 h0.89 q0.9,0 0.9,0.9 V345.3 Z"/><path d="M786.56,345.3 V317.2 q0,-0.9 0.9,-0.9 h0.89 q0.9,0 0.9,0.9 V345.3 Z"/><path d="M790.01,345.3 V317.2 q0,-0.9 0.9,-0.9 h0.89 q0.9,0 0.9,0.9 V345.3 Z"/><path d="M793.46,345.3 V317.2 q0,-0.9 0.9,-0.9 h0.89 q0.9,0 0.9,0.9 V345.3 Z"/><path d="M796.91,345.3 V317.2 q0,-0.9 0.9,-0.9 h0.89 q0.9,0 0.9,0.9 V345.3 Z"/><path d="M800.36,345.3 V317.2 q0,-0.9 0.9,-0.9 h0.89 q0.9,0 0.9,0.9 V345.3 Z"/><path d="M803.81,345.3 V318.2 q0,-0.9 0.9,-0.9 h0.89 q0.9,0 0.9,0.9 V345.3 Z"/><path d="M807.26,345.3 V318.2 q0,-0.9 0.9,-0.9 h0.89 q0.9,0 0.9,0.9 V345.3 Z"/><path d="M810.71,345.3 V318.2 q0,-0.9 0.9,-0.9 h0.89 q0.9,0 0.9,0.9 V345.3 Z"/><path d="M814.16,345.3 V318.2 q0,-0.9 0.9,-0.9 h0.89 q0.9,0 0.9,0.9 V345.3 Z"/><path d="M817.61,345.3 V318.2 q0,-0.9 0.9,-0.9 h0.89 q0.9,0 0.9,0.9 V345.3 Z"/><path d="M821.06,345.3 V318.2 q0,-0.9 0.9,-0.9 h0.89 q0.9,0 0.9,0.9 V345.3 Z"/><path d="M824.51,345.3 V318.2 q0,-0.9 0.9,-0.9 h0.89 q0.9,0 0.9,0.9 V345.3 Z"/><path d="M827.96,345.3 V318.2 q0,-0.9 0.9,-0.9 h0.89 q0.9,0 0.9,0.9 V345.3 Z"/><path d="M831.41,345.3 V318.2 q0,-0.9 0.9,-0.9 h0.89 q0.9,0 0.9,0.9 V345.3 Z"/><path d="M834.86,345.3 V318.2 q0,-0.9 0.9,-0.9 h0.89 q0.9,0 0.9,0.9 V345.3 Z"/><path d="M838.31,345.3 V318.2 q0,-0.9 0.9,-0.9 h0.89 q0.9,0 0.9,0.9 V345.3 Z"/><path d="M841.76,345.3 V318.2 q0,-0.9 0.9,-0.9 h0.89 q0.9,0 0.9,0.9 V345.3 Z"/><path d="M845.21,345.3 V318.2 q0,-0.9 0.9,-0.9 h0.89 q0.9,0 0.9,0.9 V345.3 Z"/><path d="M848.66,345.3 V318.2 q0,-0.9 0.9,-0.9 h0.89 q0.9,0 0.9,0.9 V345.3 Z"/><path d="M852.11,345.3 V318.2 q0,-0.9 0.9,-0.9 h0.89 q0.9,0 0.9,0.9 V345.3 Z"/><path d="M855.56,345.3 V318.2 q0,-0.9 0.9,-0.9 h0.89 q0.9,0 0.9,0.9 V345.3 Z"/><path d="M859.01,345.3 V318.2 q0,-0.9 0.9,-0.9 h0.89 q0.9,0 0.9,0.9 V345.3 Z"/><path d="M862.46,345.3 V318.2 q0,-0.9 0.9,-0.9 h0.89 q0.9,0 0.9,0.9 V345.3 Z"/><path d="M865.91,345.3 V319.2 q0,-0.9 0.9,-0.9 h0.89 q0.9,0 0.9,0.9 V345.3 Z"/><path d="M869.36,345.3 V319.2 q0,-0.9 0.9,-0.9 h0.89 q0.9,0 0.9,0.9 V345.3 Z"/><path d="M872.81,345.3 V319.2 q0,-0.9 0.9,-0.9 h0.89 q0.9,0 0.9,0.9 V345.3 Z"/><path d="M876.26,345.3 V319.2 q0,-0.9 0.9,-0.9 h0.89 q0.9,0 0.9,0.9 V345.3 Z"/><path d="M879.71,345.3 V319.2 q0,-0.9 0.9,-0.9 h0.89 q0.9,0 0.9,0.9 V345.3 Z"/><path d="M883.16,345.3 V319.2 q0,-0.9 0.9,-0.9 h0.89 q0.9,0 0.9,0.9 V345.3 Z"/><path d="M886.61,345.3 V319.2 q0,-0.9 0.9,-0.9 h0.89 q0.9,0 0.9,0.9 V345.3 Z"/><path d="M890.06,345.3 V319.2 q0,-0.9 0.9,-0.9 h0.89 q0.9,0 0.9,0.9 V345.3 Z"/><path d="M893.51,345.3 V319.2 q0,-0.9 0.9,-0.9 h0.89 q0.9,0 0.9,0.9 V345.3 Z"/><path d="M896.96,345.3 V319.2 q0,-0.9 0.9,-0.9 h0.89 q0.9,0 0.9,0.9 V345.3 Z"/><path d="M900.41,345.3 V319.2 q0,-0.9 0.9,-0.9 h0.89 q0.9,0 0.9,0.9 V345.3 Z"/><path d="M903.86,345.3 V320.1 q0,-0.9 0.9,-0.9 h0.89 q0.9,0 0.9,0.9 V345.3 Z"/><path d="M907.31,345.3 V320.1 q0,-0.9 0.9,-0.9 h0.89 q0.9,0 0.9,0.9 V345.3 Z"/><path d="M910.76,345.3 V320.1 q0,-0.9 0.9,-0.9 h0.89 q0.9,0 0.9,0.9 V345.3 Z"/><path d="M914.21,345.3 V320.1 q0,-0.9 0.9,-0.9 h0.89 q0.9,0 0.9,0.9 V345.3 Z"/><path d="M917.66,345.3 V320.1 q0,-0.9 0.9,-0.9 h0.89 q0.9,0 0.9,0.9 V345.3 Z"/><path d="M921.11,345.3 V320.1 q0,-0.9 0.9,-0.9 h0.89 q0.9,0 0.9,0.9 V345.3 Z"/><path d="M924.56,345.3 V320.1 q0,-0.9 0.9,-0.9 h0.89 q0.9,0 0.9,0.9 V345.3 Z"/><path d="M928.01,345.3 V320.1 q0,-0.9 0.9,-0.9 h0.89 q0.9,0 0.9,0.9 V345.3 Z"/><path d="M931.46,345.3 V320.1 q0,-0.9 0.9,-0.9 h0.89 q0.9,0 0.9,0.9 V345.3 Z"/><path d="M934.91,345.3 V320.1 q0,-0.9 0.9,-0.9 h0.89 q0.9,0 0.9,0.9 V345.3 Z"/><path d="M938.36,345.3 V320.1 q0,-0.9 0.9,-0.9 h0.89 q0.9,0 0.9,0.9 V345.3 Z"/><path d="M941.81,345.3 V320.1 q0,-0.9 0.9,-0.9 h0.89 q0.9,0 0.9,0.9 V345.3 Z"/><path d="M945.26,345.3 V320.1 q0,-0.9 0.9,-0.9 h0.89 q0.9,0 0.9,0.9 V345.3 Z"/><path d="M948.71,345.3 V320.1 q0,-0.9 0.9,-0.9 h0.89 q0.9,0 0.9,0.9 V345.3 Z"/><path d="M952.16,345.3 V320.1 q0,-0.9 0.9,-0.9 h0.89 q0.9,0 0.9,0.9 V345.3 Z"/><path d="M955.61,345.3 V320.1 q0,-0.9 0.9,-0.9 h0.89 q0.9,0 0.9,0.9 V345.3 Z"/><path d="M959.06,345.3 V320.1 q0,-0.9 0.9,-0.9 h0.89 q0.9,0 0.9,0.9 V345.3 Z"/><path d="M962.51,345.3 V320.1 q0,-0.9 0.9,-0.9 h0.89 q0.9,0 0.9,0.9 V345.3 Z"/><path d="M965.96,345.3 V321.1 q0,-0.9 0.9,-0.9 h0.89 q0.9,0 0.9,0.9 V345.3 Z"/><path d="M969.41,345.3 V321.1 q0,-0.9 0.9,-0.9 h0.89 q0.9,0 0.9,0.9 V345.3 Z"/><path d="M972.86,345.3 V321.1 q0,-0.9 0.9,-0.9 h0.89 q0.9,0 0.9,0.9 V345.3 Z"/><path d="M976.31,345.3 V321.1 q0,-0.9 0.9,-0.9 h0.89 q0.9,0 0.9,0.9 V345.3 Z"/><path d="M979.76,345.3 V321.1 q0,-0.9 0.9,-0.9 h0.89 q0.9,0 0.9,0.9 V345.3 Z"/><path d="M983.21,345.3 V321.1 q0,-0.9 0.9,-0.9 h0.89 q0.9,0 0.9,0.9 V345.3 Z"/><path d="M986.66,345.3 V321.1 q0,-0.9 0.9,-0.9 h0.89 q0.9,0 0.9,0.9 V345.3 Z"/><path d="M990.11,345.3 V321.1 q0,-0.9 0.9,-0.9 h0.89 q0.9,0 0.9,0.9 V345.3 Z"/></g>
<g stroke="#282c3a" stroke-width="1" shape-rendering="crispEdges"><line x1="993.5" y1="3" x2="993.5" y2="346"/>
<line x1="0" y1="345.5" x2="994" y2="345.5"/></g>
<line x1="4" y1="29.4" x2="993" y2="29.4" stroke="#a3a7b6" stroke-width="1" stroke-dasharray="1 3"/>
<polyline points="1.9,29.4 5.35,41.1 8.8,51.6 12.25,46.6 15.7,62.4 19.15,71.2 22.6,54.1 26.05,42.5 29.5,39.1 32.95,44.9 36.4,47.4 39.85,54.6 43.3,57.9 46.75,57.4 50.2,60.4 53.65,50.8 57.1,41.6 60.55,40.3 64.0,54.1 67.45,64.9 70.9,75.7 74.35,86.2 77.8,80.7 81.25,74.0 84.7,56.6 88.15,53.3 91.6,62.9 95.05,57.4 98.5,54.6 101.95,49.4 105.4,51.3 108.85,68.2 112.3,69.4 115.75,64.9 119.2,70.2 122.65,67.4 126.1,65.4 129.55,63.2 133.0,59.9 136.45,45.8 139.9,54.9 143.35,60.7 146.8,62.9 150.25,74.0 153.7,72.9 157.15,86.5 160.6,79.8 164.05,75.7 167.5,69.0 170.95,65.8 174.4,68.6 177.85,79.1 181.3,84.6 184.75,96.5 188.2,108.2 191.65,100.7 195.1,94.4 198.55,100.7 202.0,102.4 205.45,114.0 208.9,136.6 212.35,154.1 215.8,162.9 219.25,166.2 222.7,170.2 226.15,184.0 229.6,169.8 233.05,172.3 236.5,169.0 239.95,172.3 243.4,181.1 246.85,182.3 250.3,150.7 253.75,139.9 257.2,144.1 260.65,139.9 264.1,153.2 267.55,156.5 271.0,161.5 274.45,167.4 277.9,173.2 281.35,177.7 284.8,186.1 288.25,174.8 291.7,164.4 295.15,181.5 298.6,190.8 302.05,192.9 305.5,194.9 308.95,195.4 312.4,199.9 315.85,203.7 319.3,204.4 322.75,213.2 326.2,220.7 329.65,230.3 333.1,214.0 336.55,206.5 340.0,212.4 343.45,213.7 346.9,211.9 350.35,198.2 353.8,190.3 357.25,189.9 360.7,181.6 364.15,182.9 367.6,178.9 371.05,172.7 374.5,158.2 377.95,152.4 381.4,166.2 384.85,178.2 388.3,185.0 391.75,177.9 395.2,195.2 398.65,191.6 402.1,177.8 405.55,169.9 409.0,173.4 412.45,144.1 415.9,134.9 419.35,132.4 422.8,137.4 426.25,140.7 429.7,139.6 433.15,136.1 436.6,143.2 440.05,142.7 443.5,154.0 446.95,158.2 450.4,156.5 453.85,152.4 457.3,156.5 460.75,161.0 464.2,154.0 467.65,153.5 471.1,157.4 474.55,161.9 478.0,143.2 481.45,149.1 484.9,153.5 488.35,157.4 491.8,154.9 495.25,151.1 498.7,134.9 502.15,134.9 505.6,127.5 509.05,128.3 512.5,133.3 515.95,120.3 519.4,126.3 522.85,122.0 526.3,123.1 529.75,128.1 533.2,125.3 536.65,134.9 540.1,144.9 543.55,146.6 547.0,151.2 550.45,149.6 553.9,150.7 557.35,146.6 560.8,148.6 564.25,152.4 567.7,155.7 571.15,170.7 574.6,178.1 578.05,174.0 581.5,174.0 584.95,172.7 588.4,174.5 591.85,165.5 595.3,166.8 598.75,160.9 602.2,172.0 605.65,177.2 609.1,178.8 612.55,184.0 616.0,186.9 619.45,197.0 622.9,198.5 626.35,202.8 629.8,205.1 633.25,194.8 636.7,192.0 640.15,191.2 643.6,196.0 647.05,190.4 650.5,194.5 653.95,191.9 657.4,188.7 660.85,192.0 664.3,187.4 667.75,185.4 671.2,182.9 674.65,180.4 678.1,183.2 681.55,185.7 685.0,179.9 688.45,178.7 691.9,180.2 695.35,175.4 698.8,177.9 702.25,184.0 705.7,189.5 709.15,194.5 712.6,197.3 716.05,201.5 719.5,201.0 722.95,196.0 726.4,199.8 729.85,194.8 733.3,193.5 736.75,191.0 740.2,189.5 743.65,187.0 747.1,190.7 750.55,196.8 754.0,193.9 757.45,192.6 760.9,193.7 764.35,194.7 767.8,199.6 771.25,196.2 774.7,205.7 778.15,219.5 781.6,215.4 785.05,222.3 788.5,226.2 791.95,237.6 795.4,236.5 798.85,216.5 802.3,210.7 805.75,205.7 809.2,200.4 812.65,197.1 816.1,196.1 819.55,188.8 823.0,184.9 826.45,188.8 829.9,192.1 833.35,189.6 836.8,190.4 840.25,184.9 843.7,176.1 847.15,167.0 850.6,165.9 854.05,162.3 857.5,169.7 860.95,170.1 864.4,169.3 867.85,157.4 871.3,166.3 874.75,171.6 878.2,174.2 881.65,171.2 885.1,172.1 888.55,164.8 892.0,158.2 895.45,153.7 898.9,148.2 902.35,149.0 905.8,144.6 909.25,150.7 912.7,136.2 916.15,141.2 919.6,139.4 923.05,142.9 926.5,140.4 929.95,149.5 933.4,158.7 936.85,157.0 940.3,154.9 943.75,156.9 947.2,162.7 950.65,166.5 954.1,162.3 957.55,161.5 961.0,162.0 964.45,174.0 967.9,174.8 971.35,174.0 974.8,173.1 978.25,166.5 981.7,157.4 985.15,162.8 988.6,149.0 992.0,119.3" fill="none" stroke="#ea3943" stroke-width="2" stroke-linejoin="round" stroke-linecap="round"/>
<rect x="0.6" y="27.6" width="1.4" height="1.4" fill="#16c784"/>
<!-- mini chart -->
<g stroke="#282c3a" stroke-width="1" shape-rendering="crispEdges">
<line x1="0" y1="400.5" x2="993" y2="400.5"/>
<line x1="992.5" y1="400" x2="992.5" y2="441"/>
<line x1="34.5" y1="401" x2="34.5" y2="441"/><line x1="121.5" y1="401" x2="121.5" y2="441"/><line x1="207.5" y1="401" x2="207.5" y2="441"/><line x1="294.5" y1="401" x2="294.5" y2="441"/><line x1="380.5" y1="401" x2="380.5" y2="441"/><line x1="467.5" y1="401" x2="467.5" y2="441"/><line x1="553.5" y1="401" x2="553.5" y2="441"/><line x1="640.5" y1="401" x2="640.5" y2="441"/><line x1="726.5" y1="401" x2="726.5" y2="441"/><line x1="813.5" y1="401" x2="813.5" y2="441"/><line x1="900.5" y1="401" x2="900.5" y2="441"/><line x1="986.5" y1="401" x2="986.5" y2="441"/>
</g>
<path d="M0,441 L0,440.5 L322.5,440.5 L327.3,437.9 L337.2,437.9 L342.5,439.5 L359.8,438.7 L375.7,437.9 L376.8,431.2 L378.9,432 L381,416.6 L382.7,404.1 L384.3,416.6 L386.4,424.6 L389.6,432 L392.2,428.6 L397,432 L403.7,435.7 L407.7,432 L410.9,431.8 L415.6,433.9 L418.3,433.4 L423.6,435.7 L432.9,436.8 L442.8,438.4 L443.8,434.7 L455.5,436 L463.5,437.9 L467.5,437.1 L476.8,438.4 L498,437.9 L503.4,436.3 L509.3,435.7 L519.4,438.1 L538,437.9 L546,438.7 L553.3,438.9 L565.3,437.6 L573.2,439.2 L601.2,438.4 L606.5,437.3 L630.4,437.9 L633.1,434.1 L638.4,435.2 L640.5,438.4 L646.9,437.3 L650.4,434.7 L657,435.7 L662.9,433.9 L665,424.6 L667.7,428.6 L669.8,423.5 L674.3,423.5 L676.2,430.4 L683.6,433.1 L690.3,433.9 L694.3,428.6 L699.6,427.2 L703.6,431.2 L708.9,428.6 L714.2,427.2 L720.9,431.2 L726.7,431.2 L734.1,433.9 L738.1,432 L742.1,433.1 L748.8,431.5 L754.1,433.1 L759.4,436.5 L768.7,437.9 L788.7,437.3 L790,436.9 L795,435.5 L804,437.3 L814,437.5 L820,436.5 L832.9,436.9 L836.9,435.5 L847.8,436.3 L851.8,435.3 L859.8,434.9 L860.8,432.5 L866.8,434.3 L869.8,435.5 L883.7,435.3 L887.7,433.5 L891.7,434.5 L895.7,433.5 L900.7,434.3 L905.7,435.5 L911.7,435.3 L917.6,433.3 L922.6,434.5 L929.6,435.5 L944.6,436.1 L946.6,434.3 L955.5,434.9 L963.5,434.3 L973.5,435.3 L976.5,430.9 L978.5,422.9 L980.1,411.4 L985,417.2 L988.5,415.5 L990.6,411 L991.5,407.9 L992.5,409.5 L992.5,441 Z" fill="#1c2340"/>
<polyline points="0,440.5 322.5,440.5 327.3,437.9 337.2,437.9 342.5,439.5 359.8,438.7 375.7,437.9 376.8,431.2 378.9,432 381,416.6 382.7,404.1 384.3,416.6 386.4,424.6 389.6,432 392.2,428.6 397,432 403.7,435.7 407.7,432 410.9,431.8 415.6,433.9 418.3,433.4 423.6,435.7 432.9,436.8 442.8,438.4 443.8,434.7 455.5,436 463.5,437.9 467.5,437.1 476.8,438.4 498,437.9 503.4,436.3 509.3,435.7 519.4,438.1 538,437.9 546,438.7 553.3,438.9 565.3,437.6 573.2,439.2 601.2,438.4 606.5,437.3 630.4,437.9 633.1,434.1 638.4,435.2 640.5,438.4 646.9,437.3 650.4,434.7 657,435.7 662.9,433.9 665,424.6 667.7,428.6 669.8,423.5 674.3,423.5 676.2,430.4 683.6,433.1 690.3,433.9 694.3,428.6 699.6,427.2 703.6,431.2 708.9,428.6 714.2,427.2 720.9,431.2 726.7,431.2 734.1,433.9 738.1,432 742.1,433.1 748.8,431.5 754.1,433.1 759.4,436.5 768.7,437.9 788.7,437.3 790,436.9 795,435.5 804,437.3 814,437.5 820,436.5 832.9,436.9 836.9,435.5 847.8,436.3 851.8,435.3 859.8,434.9 860.8,432.5 866.8,434.3 869.8,435.5 883.7,435.3 887.7,433.5 891.7,434.5 895.7,433.5 900.7,434.3 905.7,435.5 911.7,435.3 917.6,433.3 922.6,434.5 929.6,435.5 944.6,436.1 946.6,434.3 955.5,434.9 963.5,434.3 973.5,435.3 976.5,430.9 978.5,422.9 980.1,411.4 985,417.2 988.5,415.5 990.6,411 991.5,407.9 992.5,409.5" fill="none" stroke="#3a66e6" stroke-width="1.1" stroke-linejoin="round"/>
<!-- handle -->
<rect x="984.3" y="409" width="15.5" height="22" rx="7.5" fill="#8092c0" opacity="0.3" filter="url(#gl)"/>
<rect x="985.3" y="410" width="13.5" height="20" rx="6.5" fill="#23262f"/>
<rect x="990.2" y="416.1" width="0.8" height="7.8" fill="#e8e9ee"/>
<rect x="993" y="416.1" width="0.8" height="7.8" fill="#e8e9ee"/>
<!-- history badge -->
<path d="M2.2,383.3 L12.0,372.5 Q13.5,371.1 15.8,371.1 L28.6,371.1 A12.3,12.3 0 0 1 28.6,395.7 L15.8,395.7 Q13.5,395.7 12.0,394.2 Z" fill="#656b86"/>
<g fill="none" stroke="#fff" stroke-width="1.3" stroke-linecap="round" stroke-linejoin="round">
<path d="M12.87,381.9 A5.1,5.1 0 1 1 13.62,386.1"/>
<path d="M17.8,380.0 L17.8,383.2 L20.1,384.7"/>
</g>
<path d="M11.3,380.0 L14.7,380.7 L12.5,383.3 Z" fill="#fff"/>
<!-- logo -->
<g transform="translate(838.4,285.4) scale(0.3033)" fill="#d1d4e0">
<path d="M66.54 46.41a4.09 4.09 0 0 1-4.170.28c-1.540-.87-2.370-2.910-2.370-5.690v-8.520c0-4.090-1.620-7-4.330-7.790-4.580-1.340-8 4.270-9.320 6.380l-8.100 13.110v-16c-.09-3.690-1.290-5.900-3.560-6.560-1.500-.44-3.750-.26-5.940 3.080l-18.110 29.070a32 32 0 0 1-3.640-14.940c0-17.520 14-31.770 31.250-31.770S69.500 21.310 69.500 38.830v.18c.17 3.390-.93 6.090-2.930 7.400zm10-7.570v-.17C76.400 17.320 59.280 0 38.250 0S0 17.420 0 38.830s17.160 38.840 38.250 38.840a37.810 37.810 0 0 0 26-10.360 3.560 3.560 0 0 0 .18-5 3.430 3.430 0 0 0-4.860-.230 30.930 30.930 0 0 1-44.570-2.080l16.300-26.200v12.090c0 5.810 2.250 7.690 4.140 8.240s4.780.17 7.810-4.750l9-14.570c.28-.47.550-.87.790-1.220v7.410c0 5.430 2.180 9.770 6 11.910a11 11 0 0 0 11.210-.45c4.200-2.730 6.490-7.670 6.250-13.620z"/>
</g>
</svg>
<div class="tl" style="left:27.9px">8:00 PM</div><div class="tl" style="left:110.7px">10:00 PM</div><div class="tl" style="left:193.4px">25 Jan</div><div class="tl" style="left:276.2px">2:00 AM</div><div class="tl" style="left:358.9px">4:00 AM</div><div class="tl" style="left:441.7px">6:00 AM</div><div class="tl" style="left:524.5px">8:00 AM</div><div class="tl" style="left:607.2px">10:00 AM</div><div class="tl" style="left:690.0px">12:00 PM</div><div class="tl" style="left:772.7px">2:00 PM</div><div class="tl" style="left:855.5px">4:00 PM</div><div class="tl" style="left:938.3px">6:00 PM</div><div class="yr" style="left:15.4px">2014</div><div class="yr" style="left:102.4px">2015</div><div class="yr" style="left:188.4px">2016</div><div class="yr" style="left:275.4px">2017</div><div class="yr" style="left:361.4px">2018</div><div class="yr" style="left:448.4px">2019</div><div class="yr" style="left:534.4px">2020</div><div class="yr" style="left:621.4px">2021</div><div class="yr" style="left:707.4px">2022</div><div class="yr" style="left:794.4px">2023</div><div class="yr" style="left:881.4px">2024</div><div class="yr" style="left:967.4px">2025</div><div class="pl" style="top:44.0px">3.160</div><div class="pl" style="top:93.0px">3.140</div><div class="pl" style="top:141.0px">3.120</div><div class="pl" style="top:189.0px">3.100</div><div class="pl" style="top:238.0px;letter-spacing:0.5px">3.080</div><div class="pl" style="top:286.0px;letter-spacing:0.5px">3.060</div>
<div class="usd">USD</div>
<div class="cur">3.132</div>
<div class="open">3.1696</div>
<div class="hist">5</div>
<div class="wm">CoinMarketCap</div>
</body></html>
